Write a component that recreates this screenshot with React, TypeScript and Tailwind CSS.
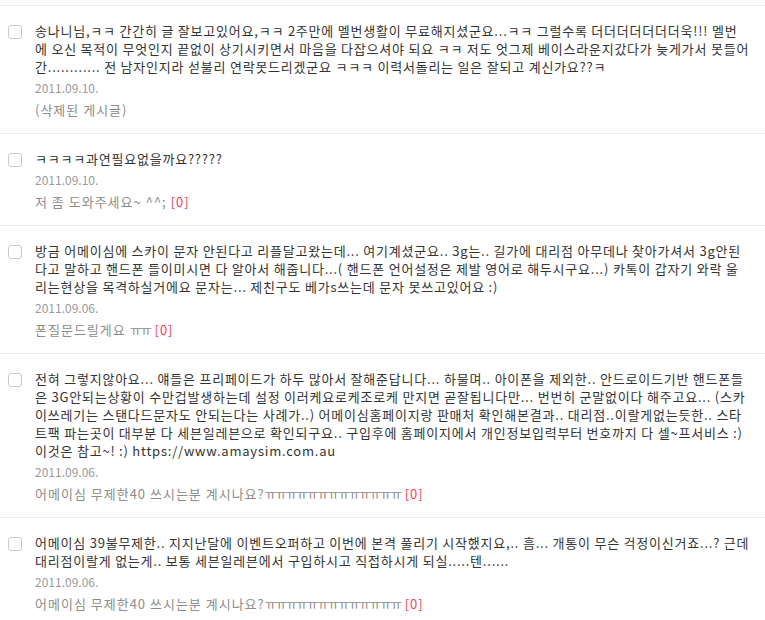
const items = [
  {
    body: '송나니님,ㅋㅋ 간간히 글 잘보고있어요,ㅋㅋ 2주만에 멜번생활이 무료해지셨군요...ㅋㅋ 그럴수록 더더더더더더더욱!!! 멜번에 오신 목적이 무엇인지 끝없이 상기시키면서 마음을 다잡으셔야 되요 ㅋㅋ 저도 엇그제 베이스라운지갔다가 늦게가서 못들어간............ 전 남자인지라 섣불리 연락못드리겠군요 ㅋㅋㅋ 이력서돌리는 일은 잘되고 계신가요??ㅋ',
    date: '2011.09.10.',
    post: '(삭제된 게시글)',
    count: null as number | null,
  },
  {
    body: 'ㅋㅋㅋㅋ과연필요없을까요?????',
    date: '2011.09.10.',
    post: '저 좀 도와주세요~ ^^;',
    count: 0,
  },
  {
    body: '방금 어메이심에 스카이 문자 안된다고 리플달고왔는데... 여기계셨군요.. 3g는.. 길가에 대리점 아무데나 찾아가셔서 3g안된다고 말하고 핸드폰 들이미시면 다 알아서 해줍니다...( 핸드폰 언어설정은 제발 영어로 해두시구요...) 카톡이 갑자기 와락 울리는현상을 목격하실거에요 문자는... 제친구도 베가s쓰는데 문자 못쓰고있어요 :)',
    date: '2011.09.06.',
    post: '폰질문드릴게요 ㅠㅠ',
    count: 0,
  },
  {
    body: '전혀 그렇지않아요... 얘들은 프리페이드가 하두 많아서 잘해준답니다... 하물며.. 아이폰을 제외한.. 안드로이드기반 핸드폰들은 3G안되는상황이 수만겁발생하는데 설정 이러케요로케조로케 만지면 곧잘됩니다만... 번번히 군말없이다 해주고요... (스카이쓰레기는 스탠다드문자도 안되는다는 사례가..) 어메이심홈페이지랑 판매처 확인해본결과.. 대리점..이랄게없는듯한.. 스타트팩 파는곳이 대부분 다 세븐일레븐으로 확인되구요.. 구입후에 홈페이지에서 개인정보입력부터 번호까지 다 셀~프서비스 :) 이것은 참고~! :) https://www.amaysim.com.au',
    date: '2011.09.06.',
    post: '어메이심 무제한40 쓰시는분 계시나요?ㅠㅠㅠㅠㅠㅠㅠㅠㅠㅠㅠㅠㅠ',
    count: 0,
  },
  {
    body: '어메이심 39불무제한.. 지지난달에 이벤트오퍼하고 이번에 본격 풀리기 시작했지요,.. 흠... 개통이 무슨 걱정이신거죠...? 근데 대리점이랄게 없는게.. 보통 세븐일레븐에서 구입하시고 직접하시게 되실.....텐......',
    date: '2011.09.06.',
    post: '어메이심 무제한40 쓰시는분 계시나요?ㅠㅠㅠㅠㅠㅠㅠㅠㅠㅠㅠㅠㅠ',
    count: 0,
  },
];

// runs of ㅠ in the titles sit a little tighter than the rest
function Post({ text }: { text: string }) {
  return (
    <>
      {text.split(/(ㅠ+)/).map((part, i) =>
        /^ㅠ+$/.test(part) ? (
          <span key={i} className="tracking-[-1.5px]">
            {part}
          </span>
        ) : (
          part
        )
      )}
    </>
  );
}

export default function App() {
  return (
    <div
      className="bg-white w-[765px] h-[620px] overflow-hidden pt-[5px]"
      style={{ fontFamily: "'Noto Sans CJK KR', 'Noto Sans', sans-serif" }}
    >
      <ul className="border-t border-[#ececec]">
        {items.map((item, i) => (
          <li key={i} className="flex gap-[13px] pl-2 pr-[15px] pt-4 pb-[14px] border-b border-[#ececec]">
            <input
              type="checkbox"
              className="appearance-none shrink-0 w-[14px] h-[14px] mt-[3px] bg-white border border-[#c9c9c9] rounded-[3px]"
            />
            <div className="flex-1 min-w-0">
              <p className="text-[13px] leading-[18px] tracking-[0.78px] text-[#333]">{item.body}</p>
              <p className="mt-[3px] text-[12px] leading-[18px] text-[#9a9a9a]">{item.date}</p>
              <p className="mt-1 text-[13px] leading-[18px] tracking-[1px] text-[#8c8c8c]">
                <Post text={item.post} />
                {item.count !== null && <span className="text-[#ff3b57]"> [{item.count}]</span>}
              </p>
            </div>
          </li>
        ))}
      </ul>
    </div>
  );
}
